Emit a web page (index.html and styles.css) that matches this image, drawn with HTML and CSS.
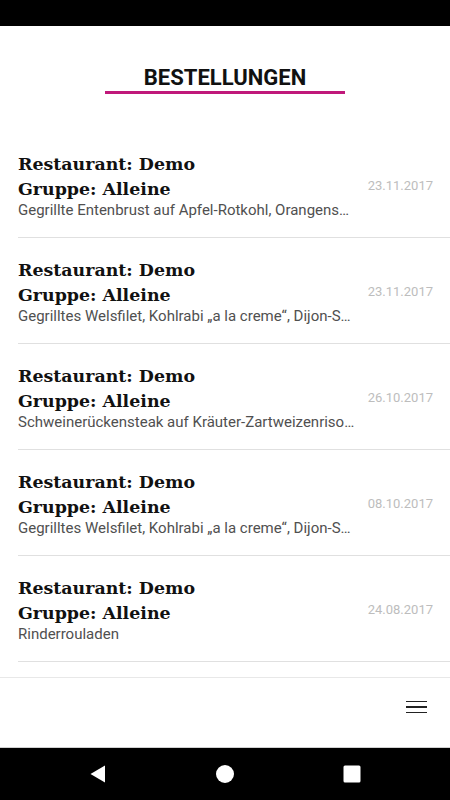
FILE: index.html
```html
<!DOCTYPE html>
<html lang="de">
<head>
    <meta charset="UTF-8">
    <meta name="viewport" content="width=device-width, initial-scale=1.0">
    <title>Bestellungen</title>
    <link rel="stylesheet" href="styles.css">
</head>

<body>
    <div class="screen">
        <div class="status-bar"></div>

        <div class="header">
            <h2 class="title">BESTELLUNGEN</h2>
        </div>

        <div class="order-list">
            <div class="order">
                <div class="order-info">
                    <div class="order-restaurant">Restaurant: Demo</div>
                    <div class="order-group">Gruppe: Alleine</div>
                    <div class="order-desc">Gegrillte Entenbrust auf Apfel-Rotkohl, Orangensauce und Kartoffelklößen</div>
                </div>
                <div class="order-date">23.11.2017</div>
            </div>
            <div class="order">
                <div class="order-info">
                    <div class="order-restaurant">Restaurant: Demo</div>
                    <div class="order-group">Gruppe: Alleine</div>
                    <div class="order-desc">Gegrilltes Welsfilet, Kohlrabi „a la creme“, Dijon-Senfsauce und Salzkartoffeln</div>
                </div>
                <div class="order-date">23.11.2017</div>
            </div>
            <div class="order">
                <div class="order-info">
                    <div class="order-restaurant">Restaurant: Demo</div>
                    <div class="order-group">Gruppe: Alleine</div>
                    <div class="order-desc">Schweinerückensteak auf Kräuter-Zartweizenrisotto mit Gemüse</div>
                </div>
                <div class="order-date">26.10.2017</div>
            </div>
            <div class="order">
                <div class="order-info">
                    <div class="order-restaurant">Restaurant: Demo</div>
                    <div class="order-group">Gruppe: Alleine</div>
                    <div class="order-desc">Gegrilltes Welsfilet, Kohlrabi „a la creme“, Dijon-Senfsauce und Salzkartoffeln</div>
                </div>
                <div class="order-date">08.10.2017</div>
            </div>
            <div class="order">
                <div class="order-info">
                    <div class="order-restaurant">Restaurant: Demo</div>
                    <div class="order-group">Gruppe: Alleine</div>
                    <div class="order-desc">Rinderrouladen</div>
                </div>
                <div class="order-date">24.08.2017</div>
            </div>
            <div class="order">
                <div class="order-info">
                    <div class="order-restaurant">Restaurant: Demo</div>
                    <div class="order-group">Gruppe: Alleine</div>
                    <div class="order-desc">Rinderrouladen</div>
                </div>
                <div class="order-date">12.08.2017</div>
            </div>
        </div>

        <div class="bottom-bar">
            <div class="menu-btn">
                <span></span>
                <span></span>
                <span></span>
            </div>
        </div>

        <div class="nav-bar">
            <svg class="nav-icon" width="18" height="18" viewBox="0 0 18 18">
                <polygon points="16,0.5 16,17.5 1.5,9" fill="#fff" />
            </svg>
            <svg class="nav-icon" width="18" height="18" viewBox="0 0 18 18">
                <circle cx="9" cy="9" r="9" fill="#fff" />
            </svg>
            <svg class="nav-icon" width="18" height="18" viewBox="0 0 18 18">
                <rect x="0.5" y="0.5" width="17" height="17" rx="1.5" fill="#fff" />
            </svg>
        </div>
    </div>
</body>

</html>
```

FILE: styles.css
```css
html,
body {
    margin: 0;
    background-color: #fff;
}

.screen {
    display: flex;
    flex-direction: column;
    height: 800px;
    font-family: Roboto, "Liberation Sans", sans-serif;
}

.status-bar {
    height: 26px;
    background-color: #000;
}

.header {
    display: flex;
    justify-content: center;
    padding: 40px 0 38px;
}

.title {
    width: 240px;
    margin: 0;
    padding-bottom: 1px;
    border-bottom: 3px solid #c0187a;
    font-size: 22px;
    font-weight: 700;
    line-height: 24px;
    text-align: center;
    color: #111;
}

.order-list {
    flex: 1;
    overflow: hidden;
}

.order {
    display: flex;
    align-items: center;
    margin-left: 18px;
    padding: 20px 17px 19px 0;
    border-bottom: 1px solid #e0e0e0;
}

.order-info {
    flex: 1;
    min-width: 0;
    margin-right: 12px;
}

.order-restaurant,
.order-group {
    font-family: "DejaVu Serif", serif;
    font-size: 17.4px;
    font-weight: 700;
    color: #111;
}

.order-restaurant {
    line-height: 24px;
}

.order-group {
    line-height: 26px;
}

.order-desc {
    font-size: 15px;
    line-height: 16px;
    color: #505050;
    white-space: nowrap;
    overflow: hidden;
    text-overflow: ellipsis;
}

.order-date {
    font-size: 13px;
    color: #bdbdbd;
}

.bottom-bar {
    height: 69px;
    display: flex;
    justify-content: flex-end;
    align-items: center;
    padding-right: 23px;
    border-top: 1px solid #e8e8e8;
    border-bottom: 1px solid #d0d0d0;
}

.menu-btn {
    display: flex;
    flex-direction: column;
    gap: 4px;
    width: 21px;
    margin-top: -11px;
}

.menu-btn span {
    height: 1.5px;
    background-color: #222;
}

.nav-bar {
    height: 52px;
    display: flex;
    justify-content: space-between;
    align-items: center;
    padding: 0 89px;
    background-color: #000;
}

.nav-icon {
    display: block;
}
```
